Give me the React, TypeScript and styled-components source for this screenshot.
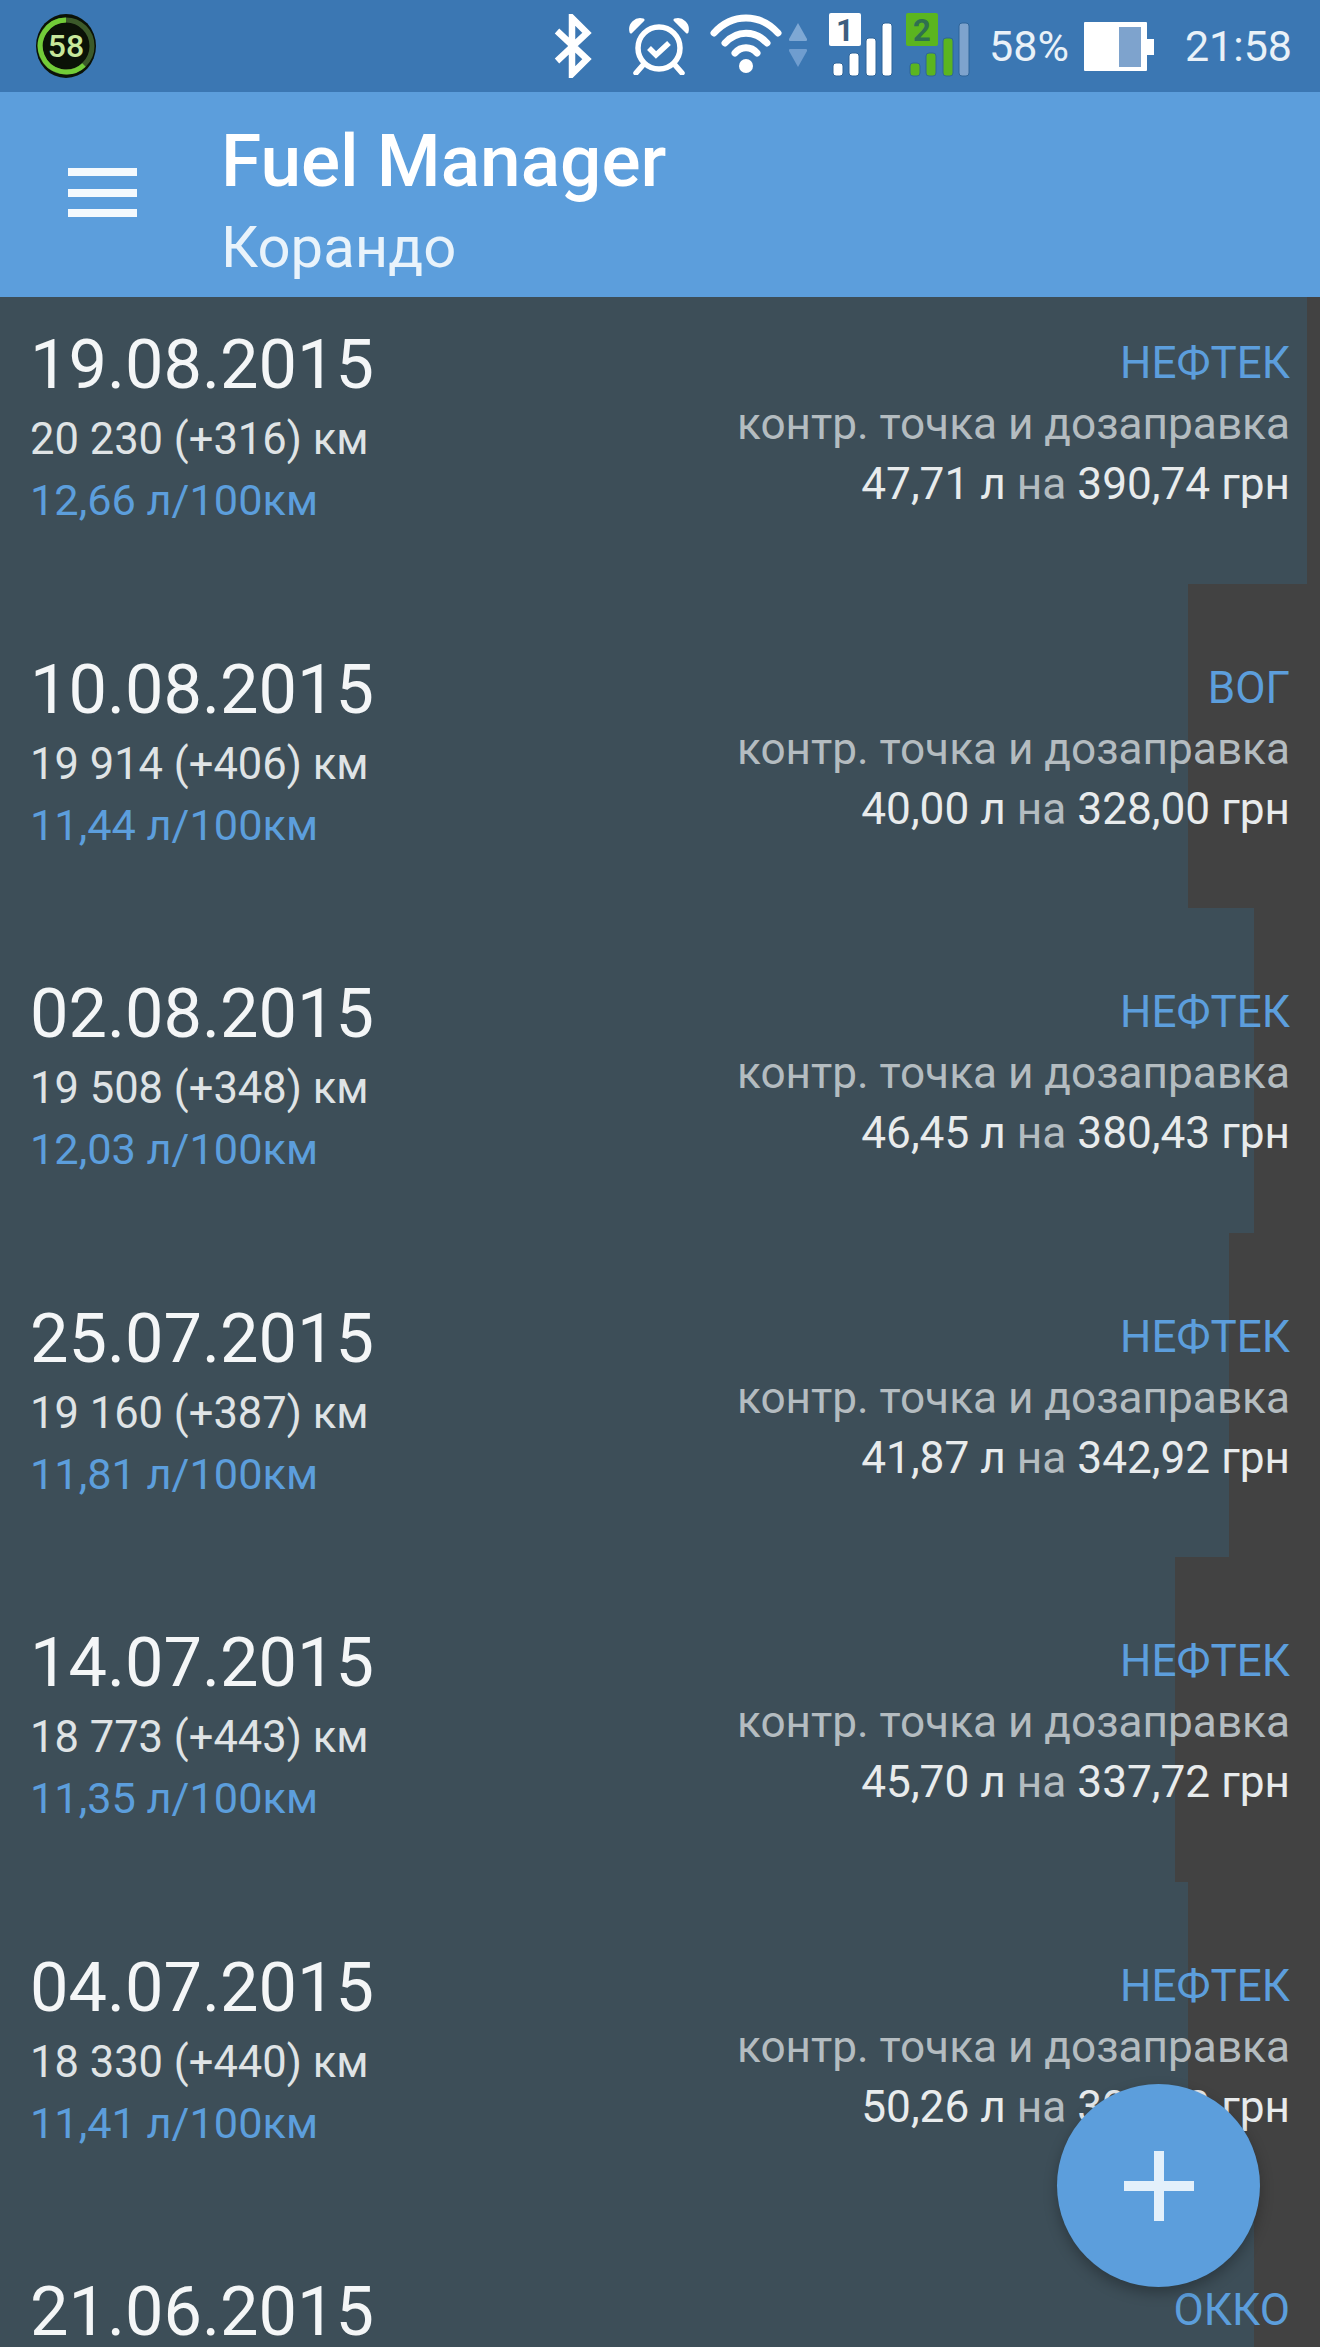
import React from "react"
import styled, { createGlobalStyle } from "styled-components"

const GlobalStyle = createGlobalStyle`
  html, body {
    margin: 0;
    padding: 0;
    background: #3d4e58;
  }
  * {
    box-sizing: border-box;
  }
`

const Screen = styled.div`
  width: 1320px;
  height: 2347px;
  position: relative;
  overflow: hidden;
  background: #3d4e58;
  font-family: Roboto, "Noto Sans", sans-serif;
  color: #fff;
`

const StatusBar = styled.div`
  height: 92px;
  background: #3b77b3;
  display: flex;
  align-items: center;
  padding: 0 28px 0 35px;
  position: relative;
  z-index: 2;
`

const StatusIcons = styled.div`
  margin-left: auto;
  display: flex;
  align-items: center;
`

const StatusText = styled.span<{ $gap: number }>`
  font-size: 43px;
  color: #e9f1f8;
  margin-left: ${({ $gap }) => $gap}px;
`

const IconSlot = styled.span<{ $gap?: number; $lift?: number }>`
  display: flex;
  margin-left: ${({ $gap }) => $gap ?? 0}px;
  margin-bottom: ${({ $lift }) => $lift ?? 0}px;
`

const AppBar = styled.header`
  height: 205px;
  background: #5c9edc;
  display: flex;
  align-items: center;
  position: relative;
  z-index: 2;
`

const MenuButton = styled.div`
  width: 221px;
  padding: 0 0 4px 68px;
  display: flex;
  flex-direction: column;
  gap: 12.5px;
`

const MenuBar = styled.span`
  display: block;
  width: 69px;
  height: 8px;
  background: #f4f9fd;
`

const Titles = styled.div`
  display: flex;
  flex-direction: column;
  padding-top: 20px;
`

const AppTitle = styled.div`
  font-size: 73px;
  font-weight: 500;
  line-height: 80px;
`

const AppSubtitle = styled.div`
  font-size: 58px;
  line-height: 82px;
  margin-top: 5px;
  color: #e9f3fb;
`

const List = styled.div`
  margin-top: -38px;
`

const Row = styled.div<{ $band: number }>`
  height: 324.5px;
  padding: 67px 30px 0;
  display: flex;
  justify-content: space-between;
  background: linear-gradient(
    to right,
    #3d4e58 ${({ $band }) => $band}px,
    #424242 ${({ $band }) => $band}px
  );
`

const LeftColumn = styled.div`
  display: flex;
  flex-direction: column;
`

const RightColumn = styled.div`
  display: flex;
  flex-direction: column;
  align-items: flex-end;
  padding-top: 8px;
`

const DateText = styled.div`
  font-size: 68.5px;
  line-height: 78px;
  color: #f4f6f7;
`

const Odometer = styled.div`
  font-size: 43.5px;
  line-height: 58px;
  margin-top: 7px;
  color: #dfe3e5;
`

const Consumption = styled.div`
  font-size: 43.3px;
  line-height: 58px;
  margin-top: 3px;
  color: #5c9edc;
`

const Station = styled.div`
  font-size: 44px;
  line-height: 58px;
  color: #5c9edc;
`

const Kind = styled.div`
  font-size: 44.15px;
  line-height: 60px;
  margin-top: 2px;
  color: #b4bcc0;
`

const Amounts = styled.div`
  font-size: 44.2px;
  line-height: 60px;
  color: #e8ebec;
`

const On = styled.span`
  color: #b4bcc0;
  margin: 0 11px;
`

const Fab = styled.div`
  position: absolute;
  left: 1057px;
  top: 2084px;
  width: 203px;
  height: 203px;
  border-radius: 50%;
  background: #5c9edc;
  box-shadow: 0 6px 14px rgba(0, 0, 0, 0.28);
  display: flex;
  align-items: center;
  justify-content: center;
`

type Fill = {
  date: string
  km?: string
  rate?: string
  station: string
  litres?: string
  price?: string
  band: number
}

const rows: Fill[] = [
  { date: "19.08.2015", km: "20 230 (+316) км", rate: "12,66 л/100км", station: "НЕФТЕК", litres: "47,71 л", price: "390,74 грн", band: 1307 },
  { date: "10.08.2015", km: "19 914 (+406) км", rate: "11,44 л/100км", station: "ВОГ", litres: "40,00 л", price: "328,00 грн", band: 1188 },
  { date: "02.08.2015", km: "19 508 (+348) км", rate: "12,03 л/100км", station: "НЕФТЕК", litres: "46,45 л", price: "380,43 грн", band: 1254 },
  { date: "25.07.2015", km: "19 160 (+387) км", rate: "11,81 л/100км", station: "НЕФТЕК", litres: "41,87 л", price: "342,92 грн", band: 1229 },
  { date: "14.07.2015", km: "18 773 (+443) км", rate: "11,35 л/100км", station: "НЕФТЕК", litres: "45,70 л", price: "337,72 грн", band: 1175 },
  { date: "04.07.2015", km: "18 330 (+440) км", rate: "11,41 л/100км", station: "НЕФТЕК", litres: "50,26 л", price: "390,00 грн", band: 1188 },
  { date: "21.06.2015", station: "ОККО", band: 1254 },
]

const BatteryBadge = () => (
  <svg width="62" height="64" viewBox="0 0 62 64">
    <ellipse cx="31" cy="32" rx="30" ry="32" fill="#0b1207" />
    <circle cx="31" cy="32" r="26" fill="none" stroke="#3c5a2a" strokeWidth="5" />
    {/* charge ring runs from the top round the left side */}
    <path d="M31 6 A26 26 0 1 0 49 51" fill="none" stroke="#72cc38" strokeWidth="5" />
    <text x="31" y="43" textAnchor="middle" fontSize="32" fontFamily="Roboto" fontWeight="500" fill="#c7e89b">
      58
    </text>
  </svg>
)

const BluetoothIcon = () => (
  <svg width="38" height="64" viewBox="0 0 38 64" fill="none" stroke="#fff" strokeWidth="6.5">
    <path d="M3 17 L33 45 L18 60 V4 L33 19 L3 47" />
  </svg>
)

const AlarmIcon = () => (
  <svg width="62" height="58" viewBox="0 0 62 58" fill="none" stroke="#fff" strokeWidth="5.5">
    <circle cx="31" cy="31" r="21" />
    <path d="M21 31 L28 38 L41 26" />
    <path d="M3 15 C1 7 8 1 15 3 Z" fill="#fff" strokeWidth="3" strokeLinejoin="round" />
    <path d="M59 15 C61 7 54 1 47 3 Z" fill="#fff" strokeWidth="3" strokeLinejoin="round" />
    <path d="M15 48 L8 56 M47 48 L54 56" strokeLinecap="round" />
  </svg>
)

const WifiIcon = () => (
  <svg width="72" height="60" viewBox="0 0 72 60" fill="none" stroke="#fff" strokeWidth="7" strokeLinecap="round">
    <path d="M4 19 C22 -1 50 -1 68 19" />
    <path d="M15 29 C27 16 45 16 57 29" />
    <path d="M25 39 C31 32 41 32 47 39" />
    <circle cx="36" cy="52" r="7" fill="#fff" stroke="none" />
  </svg>
)

const TrafficIcon = () => (
  <svg width="20" height="46" viewBox="0 0 20 46">
    <path d="M10 1 L19 17 Q19.5 19 18 19 H2 Q0.5 19 1 17 Z" fill="#7ea8d4" />
    <path d="M10 45 L19 29 Q19.5 27 18 27 H2 Q0.5 27 1 29 Z" fill="#6f9dcf" />
  </svg>
)

const signalBars = [
  { x: 4, top: 50 },
  { x: 20, top: 40 },
  { x: 37, top: 25 },
  { x: 53, top: 10 },
]

const SignalIcon = ({
  digit,
  color,
  digitColor,
  bars,
}: {
  digit: string
  color: string
  digitColor: string
  bars: string[]
}) => (
  <svg width="64" height="64" viewBox="0 0 64 64">
    <rect x="0" y="0" width="32" height="33" rx="2" fill={color} />
    <text x="16" y="28" textAnchor="middle" fontSize="31" fontWeight="700" fontFamily="Roboto" fill={digitColor}>
      {digit}
    </text>
    {signalBars.map((bar, i) => (
      <rect
        key={bar.x}
        x={bar.x}
        y={bar.top}
        width="10"
        height={63 - bar.top}
        rx="3"
        fill={bars[i]}
        stroke="#2f6599"
        strokeWidth="1"
      />
    ))}
  </svg>
)

const BatteryIcon = () => (
  <svg width="70" height="49" viewBox="0 0 70 49">
    <rect x="0" y="0" width="63" height="49" rx="1" fill="#fff" />
    <rect x="35" y="5" width="22" height="40" fill="#7ea3cd" />
    <rect x="63" y="17" width="7" height="16" fill="#fff" />
  </svg>
)

const PlusIcon = () => (
  <svg width="70" height="70" viewBox="0 0 70 70">
    <path d="M30 0 H40 V30 H70 V40 H40 V70 H30 V40 H0 V30 H30 Z" fill="#e3f0fb" />
  </svg>
)

export default function App() {
  return (
    <Screen>
      <GlobalStyle />
      <StatusBar>
        <BatteryBadge />
        <StatusIcons>
          <BluetoothIcon />
          <IconSlot $gap={36}>
            <AlarmIcon />
          </IconSlot>
          <IconSlot $gap={20} $lift={4}>
            <WifiIcon />
          </IconSlot>
          <IconSlot $gap={6} $lift={3}>
            <TrafficIcon />
          </IconSlot>
          <IconSlot $gap={21} $lift={3}>
            <SignalIcon digit="1" color="#fff" digitColor="#3d5f80" bars={["#fff", "#fff", "#fff", "#fff"]} />
          </IconSlot>
          <IconSlot $gap={13} $lift={3}>
            <SignalIcon digit="2" color="#5bb51f" digitColor="#2f7050" bars={["#5bb51f", "#5bb51f", "#5bb51f", "#7ea3cd"]} />
          </IconSlot>
          <StatusText $gap={19}>58%</StatusText>
          <IconSlot $gap={15}>
            <BatteryIcon />
          </IconSlot>
          <StatusText $gap={31}>21:58</StatusText>
        </StatusIcons>
      </StatusBar>
      <AppBar>
        <MenuButton>
          <MenuBar />
          <MenuBar />
          <MenuBar />
        </MenuButton>
        <Titles>
          <AppTitle>Fuel Manager</AppTitle>
          <AppSubtitle>Корандо</AppSubtitle>
        </Titles>
      </AppBar>
      <List>
        {rows.map((row) => (
          <Row key={row.date} $band={row.band}>
            <LeftColumn>
              <DateText>{row.date}</DateText>
              {row.km && <Odometer>{row.km}</Odometer>}
              {row.rate && <Consumption>{row.rate}</Consumption>}
            </LeftColumn>
            <RightColumn>
              <Station>{row.station}</Station>
              {row.litres && <Kind>контр. точка и дозаправка</Kind>}
              {row.litres && (
                <Amounts>
                  {row.litres}
                  <On>на</On>
                  {row.price}
                </Amounts>
              )}
            </RightColumn>
          </Row>
        ))}
      </List>
      <Fab>
        <PlusIcon />
      </Fab>
    </Screen>
  )
}
